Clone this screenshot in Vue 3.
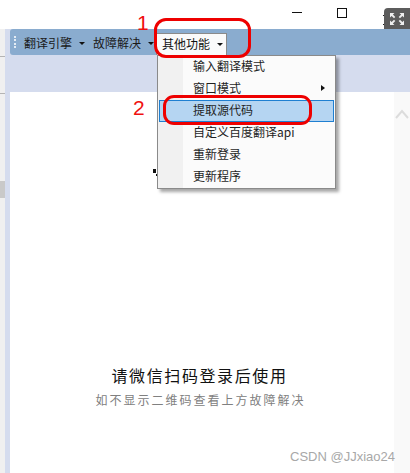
<template>
  <div class="window">
    <div class="titlebar">
      <span class="win-min"></span>
      <span class="win-max"></span>
      <span class="win-close">
        <svg width="12" height="12" viewBox="0 0 12 12"><path d="M1 1L11 11M11 1L1 11" stroke="#222" stroke-width="1" fill="none" /></svg>
      </span>
    </div>

    <div class="body">
      <div class="side">
        <div class="side-a"></div>
        <div class="side-b"></div>
        <div class="side-c"></div>
        <div class="side-d"></div>
      </div>

      <div class="main">
        <div class="toolbar">
          <div class="grip"><i v-for="n in 4" :key="n"></i></div>
          <div v-for="m in menus" :key="m" class="tool-btn" :class="{ active: m === '其他功能' }">
            {{ m }}<span class="caret"></span>
          </div>
        </div>
        <div class="band"></div>
        <div class="content">
          <div class="page">
            <div class="login-title">请微信扫码登录后使用</div>
            <div class="login-sub">如不显示二维码查看上方故障解决</div>
            <div class="mark">CSDN @JJxiao24</div>
          </div>
          <div class="scrollbar">
            <svg width="14" height="10" viewBox="0 0 14 10"><path d="M1 9L7 2L13 9" stroke="#dcdcdc" stroke-width="2" fill="none" /></svg>
          </div>
        </div>
      </div>
    </div>

    <div class="expand">
      <svg width="26" height="21" viewBox="0 0 26 21">
        <path d="M6 5h4.5l-1.6 1.6 2.4 2.4-1.3 1.3-2.4-2.4L6 9.5zM20 5v4.5l-1.6-1.6-2.4 2.4-1.3-1.3 2.4-2.4L15.5 5zM6 17v-4.5l1.6 1.6 2.4-2.4 1.3 1.3-2.4 2.4 1.6 1.6zM20 17h-4.5l1.6-1.6-2.4-2.4 1.3-1.3 2.4 2.4 1.6-1.6z" fill="#eee" />
      </svg>
    </div>

    <div class="menu">
      <div v-for="item in items" :key="item.label" class="menu-item" :class="{ hot: item.hot }">
        {{ item.label }}
        <span v-if="item.sub" class="sub-arrow"></span>
      </div>
    </div>

    <div class="cursor"></div>

    <div class="note note-1">1</div>
    <div class="note note-2">2</div>
    <div class="ring ring-1"></div>
    <div class="ring ring-2"></div>
  </div>
</template>

<script setup>
const menus = ['翻译引擎', '故障解决', '其他功能']

const items = [
  { label: '输入翻译模式' },
  { label: '窗口模式', sub: true },
  { label: '提取源代码', hot: true },
  { label: '自定义百度翻译api' },
  { label: '重新登录' },
  { label: '更新程序' }
]
</script>

<style>
html, body { margin: 0; background: #fff; }
</style>

<style scoped>
.window {
  position: relative; width: 410px; height: 473px; overflow: hidden;
  display: flex; flex-direction: column; background: #fff;
  font-family: "Noto Sans CJK SC", "Liberation Sans", sans-serif; color: #1a1a1a;
}

.titlebar { height: 29px; flex: none; position: relative; }
.win-min { position: absolute; left: 292px; top: 12px; width: 10px; height: 1px; background: #111; }
.win-max { position: absolute; left: 337px; top: 8px; width: 8px; height: 8px; border: 1px solid #111; }
.win-close { position: absolute; left: 382px; top: 7px; }

.expand {
  position: absolute; left: 384px; top: 8px; width: 26px; height: 21px;
  background: #5c5c5c; border-radius: 4px 0 0 0;
}
.expand svg { display: block; }

.body { flex: 1; display: flex; min-height: 0; }
.side { width: 5px; flex: none; background: #f0f0f0; display: flex; flex-direction: column; }
.side-a { height: 27px; border-bottom: 1px solid #b4b4b4; }
.side-b { height: 36px; border-bottom: 1px solid #b4b4b4; }
.side-c { height: 87px; }
.side-d { height: 17px; background: #c9c9c9; }

.main { flex: 1; display: flex; flex-direction: column; background: #d5dcee; padding-left: 5px; min-width: 0; }
.toolbar {
  height: 26px; flex: none; display: flex; align-items: flex-end; background: #8aaccf;
  border-radius: 3px 0 0 3px; padding-left: 4px; box-sizing: border-box;
}
.grip { width: 2px; height: 12px; align-self: center; display: flex; flex-direction: column; justify-content: space-between; margin-right: 6px; }
.grip i { width: 2px; height: 2px; background: #e4ecf4; display: block; }
.tool-btn {
  height: 22px; line-height: 19px; font-size: 12px; display: flex; align-items: flex-start;
  padding: 0 2px; margin-right: 4px; box-sizing: border-box; white-space: nowrap;
}
.tool-btn:nth-child(3) { margin-right: 0; }
.tool-btn.active {
  width: 71px; margin-right: 0; padding-left: 5px; background: #fafafa;
  border: 1px solid #8a8a8a; border-bottom: none; color: #111;
}
.caret {
  width: 0; height: 0; margin-left: 7px; margin-top: 9px;
  border-left: 3px solid transparent; border-right: 3px solid transparent; border-top: 3px solid #111;
}
.band { height: 37px; flex: none; }

.content { flex: 1; display: flex; background: #fff; min-height: 0; }
.page { flex: 1; display: flex; flex-direction: column; align-items: center; padding-top: 272px; position: relative; box-sizing: border-box; }
.scrollbar { width: 16px; flex: none; background: #f9f9f9; display: flex; justify-content: center; align-items: flex-start; padding-top: 17px; box-sizing: border-box; }
.login-title { font-size: 16px; letter-spacing: 1.6px; line-height: 22px; color: #111; margin-left: -5px; }
.login-sub { font-size: 12px; letter-spacing: 2px; line-height: 18px; color: #808080; margin-top: 5px; margin-left: -3px; }
.mark {
  position: absolute; right: -1px; top: 357px; font-family: "Liberation Sans", sans-serif;
  font-size: 13px; color: #a8a8a8; white-space: nowrap;
}

.menu {
  position: absolute; left: 157px; top: 55px; width: 179px; height: 134px; box-sizing: border-box;
  padding: 0 1px; background: linear-gradient(90deg, #f1f1f1 25px, #fbfbfb 25px);
  border: 1px solid #8a8a8a; box-shadow: 3px 3px 3px rgba(0, 0, 0, .35);
  display: flex; flex-direction: column;
}
.menu-item {
  height: 22px; flex: none; line-height: 17px; font-size: 12px; padding-left: 33px; color: #1f1f1f;
  box-sizing: border-box; position: relative; border: 1px solid transparent;
}
.menu-item.hot { background: #b5d5f2; border-color: #1f7fd1; }
.sub-arrow {
  position: absolute; right: 8px; top: 6px; width: 0; height: 0;
  border-top: 3.5px solid transparent; border-bottom: 3.5px solid transparent; border-left: 4px solid #111;
}

.cursor { position: absolute; left: 153px; top: 169px; width: 3px; height: 4px; background: #111; box-shadow: 2px 4px 0 -1px #111; }

.note { position: absolute; color: #f01010; font-family: "Liberation Sans", sans-serif; font-size: 21px; line-height: 22px; }
.note-1 { left: 137px; top: 12px; }
.note-2 { left: 133px; top: 97px; }
.ring { position: absolute; border: 3px solid #ee0000; box-sizing: border-box; }
.ring-1 { left: 154px; top: 18px; width: 97px; height: 40px; border-radius: 12px; }
.ring-2 { left: 163px; top: 95px; width: 149px; height: 30px; border-radius: 11px; }
</style>
